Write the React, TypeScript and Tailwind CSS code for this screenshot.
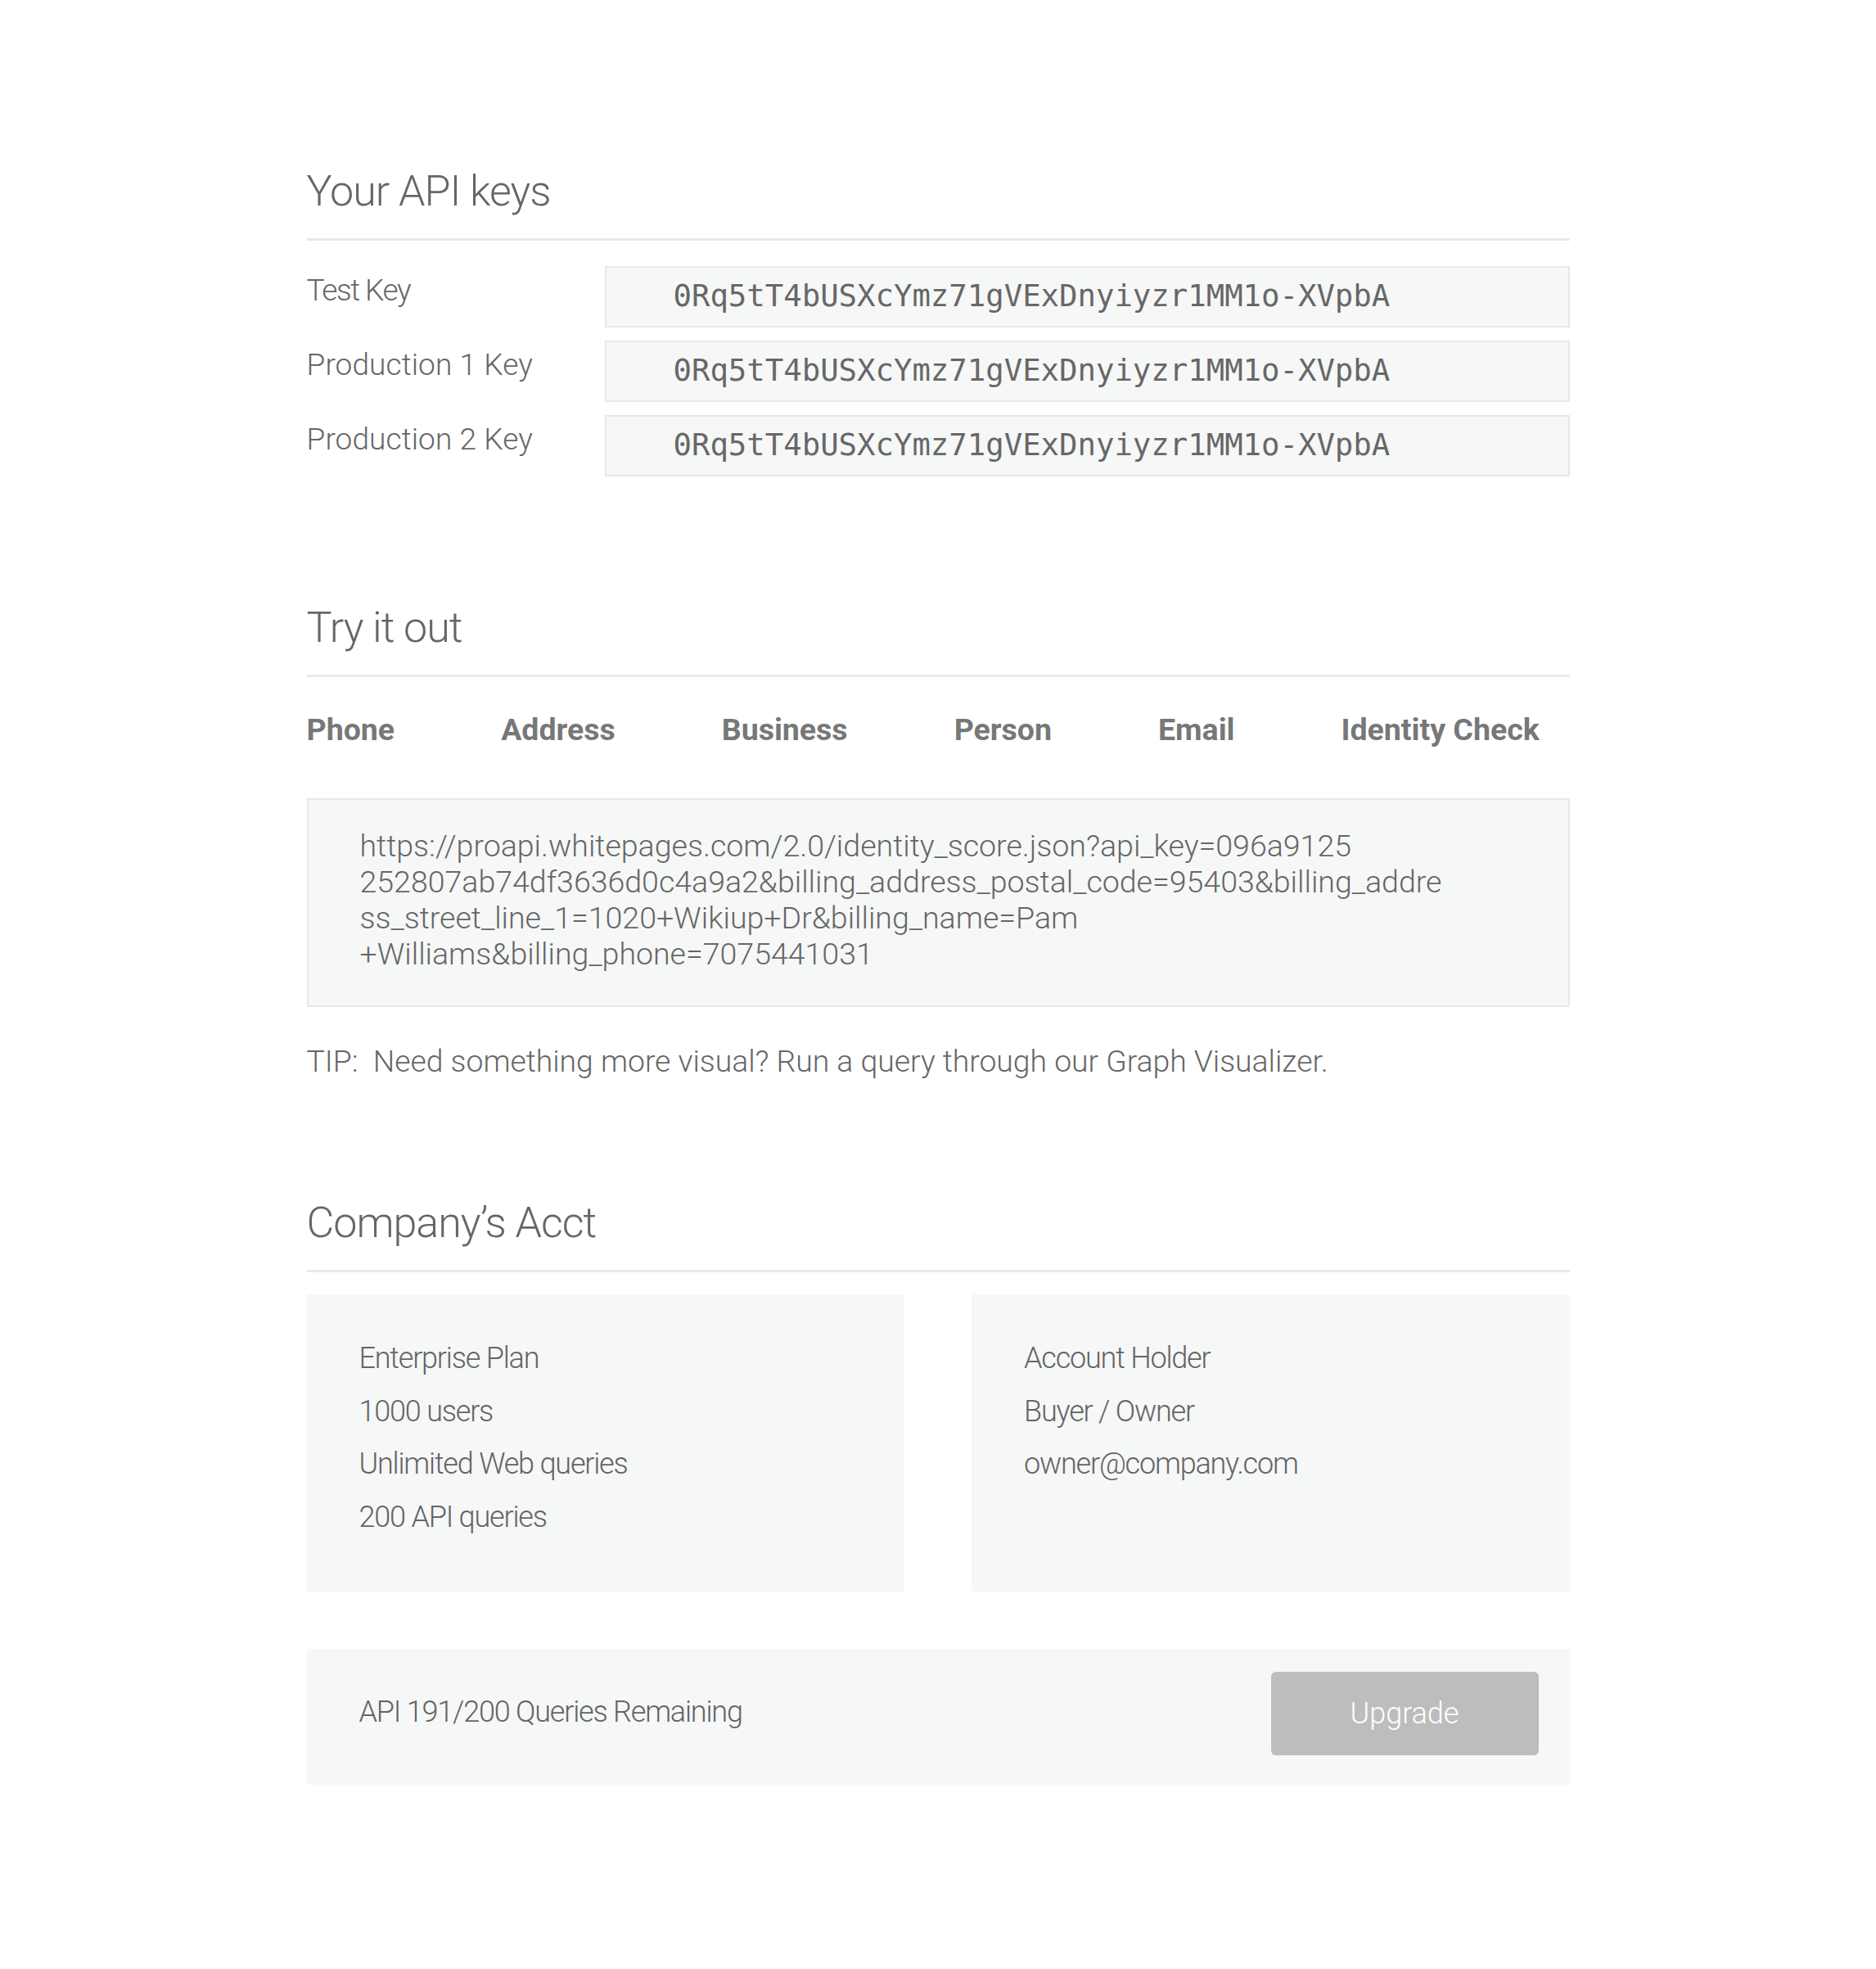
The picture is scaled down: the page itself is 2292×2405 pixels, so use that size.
import React from "react";

const KEY = "0Rq5tT4bUSXcYmz71gVExDnyiyzr1MM1o-XVpbA";

function Heading({ children }: { children: React.ReactNode }) {
  return (
    <div>
      <h2 className="text-[52px] leading-[60px] font-light tracking-[-1px] text-[#666666]">{children}</h2>
      <div className="mt-[27px] h-[3px] bg-[#e9e9e9]" />
    </div>
  );
}

function KeyRow({ label, tight }: { label: string; tight?: boolean }) {
  return (
    <div className="flex items-start">
      <div
        className={`w-[364px] shrink-0 pt-[8px] text-[37px] leading-[44px] font-light text-[#666666] ${
          tight ? "tracking-[-1.5px]" : "tracking-[0.1px]"
        }`}
      >
        {label}
      </div>
      <div className="flex h-[75px] flex-1 items-center border-2 border-[#e8e8e8] bg-[#f6f7f7] pl-[82px] pb-[4px]">
        <span className="text-[37.3px] leading-[44px] text-[#676767]" style={{ fontFamily: '"DejaVu Sans Mono", monospace' }}>
          {KEY}
        </span>
      </div>
    </div>
  );
}

export default function App() {
  const tabs = ["Phone", "Address", "Business", "Person", "Email", "Identity Check"];
  return (
    <div className="min-h-[2405px] w-full bg-white" style={{ fontFamily: "Roboto, 'Noto Sans', sans-serif" }}>
      <div className="mx-auto w-[1543px] pt-[204px] pb-[226px]">
        {/* API keys */}
        <Heading>Your API keys</Heading>
        <div className="mt-[31px] flex flex-col gap-[16px]">
          <KeyRow label="Test Key" tight />
          <KeyRow label="Production 1 Key" />
          <KeyRow label="Production 2 Key" />
        </div>

        {/* Try it out */}
        <div className="mt-[155px]">
          <Heading>Try it out</Heading>
        </div>
        <div className="mt-[42px] flex gap-[130px] text-[37.5px] leading-[44px] font-bold text-[#767878]">
          {tabs.map((t) => (
            <span key={t}>{t}</span>
          ))}
        </div>
        <div className="mt-[62px] border-2 border-[#e8e8e8] bg-[#f6f7f7] pl-[63px] pt-[34px] pb-[41px] text-[37.5px] leading-[44px] font-light text-[#666666]">
          <div>https://proapi.whitepages.com/2.0/identity_score.json?api_key=096a9125</div>
          <div>252807ab74df3636d0c4a9a2&amp;billing_address_postal_code=95403&amp;billing_addre</div>
          <div>ss_street_line_1=1020+Wikiup+Dr&amp;billing_name=Pam</div>
          <div>+Williams&amp;billing_phone=7075441031</div>
        </div>
        <p className="mt-[44px] text-[37.3px] leading-[44px] font-light text-[#666666] whitespace-pre">
          {"TIP:  Need something more visual? Run a query through our Graph Visualizer."}
        </p>

        {/* Company's Acct */}
        <div className="mt-[146px]">
          <Heading>Company’s Acct</Heading>
        </div>
        <div className="mt-[27px] grid grid-cols-2 gap-[82px]">
          <div className="h-[363px] bg-[#f6f7f7] pl-[64px] pt-[46px] text-[36px] leading-[64.5px] font-light tracking-[-1.2px] text-[#646464]">
            <div>Enterprise Plan</div>
            <div>1000 users</div>
            <div>Unlimited Web queries</div>
            <div>200 API queries</div>
          </div>
          <div className="h-[363px] bg-[#f6f7f7] pl-[64px] pt-[46px] text-[36px] leading-[64.5px] font-light tracking-[-1.2px] text-[#646464]">
            <div>Account Holder</div>
            <div>Buyer / Owner</div>
            <div>owner@company.com</div>
          </div>
        </div>

        <div className="mt-[70px] flex h-[166px] items-center justify-between bg-[#f6f7f7] pl-[64px] pr-[38px]">
          <span className="pb-[12px] text-[36px] leading-[44px] font-light tracking-[-1.2px] text-[#646464]">
            API 191/200 Queries Remaining
          </span>
          <button className="mb-[8px] flex h-[102px] w-[327px] items-center justify-center rounded-[6px] bg-[#bdbdbd] text-[36px] font-light text-white">
            Upgrade
          </button>
        </div>
      </div>
    </div>
  );
}
